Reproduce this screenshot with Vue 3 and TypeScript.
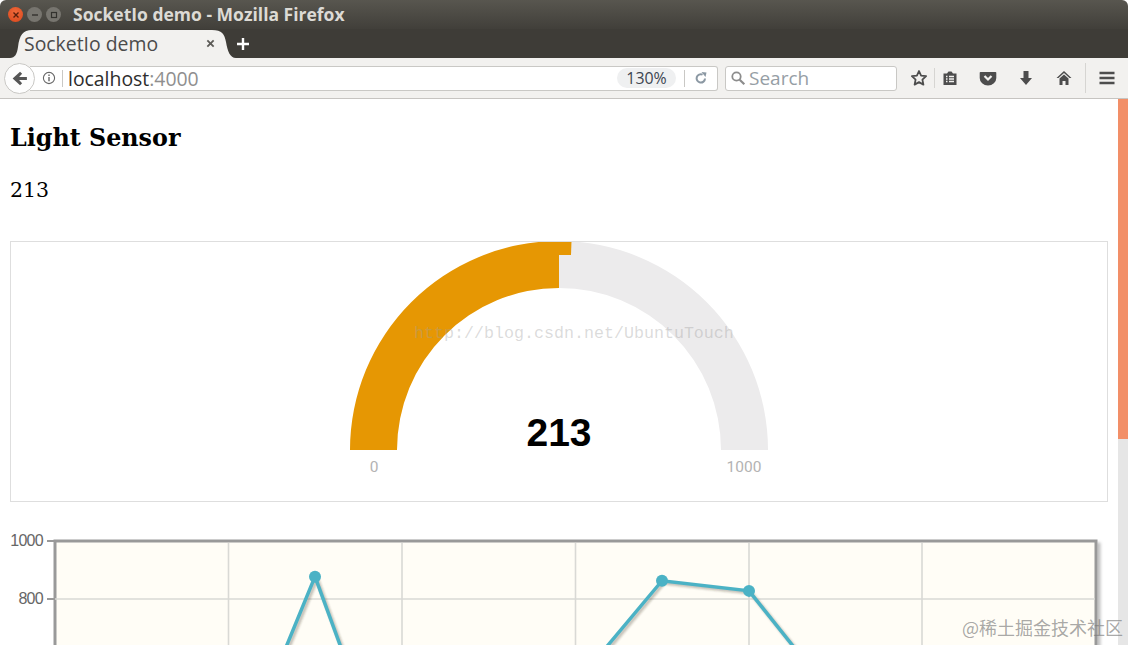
<template>
  <div class="window">
    <header class="titlebar">
      <div class="traffic">
        <span class="dot close"><svg viewBox="0 0 10 10"><path d="M2.5 2.5l5 5M7.5 2.5l-5 5" stroke="#5b1f0c" stroke-width="1.4"/></svg></span>
        <span class="dot"><svg viewBox="0 0 10 10"><path d="M2 5h6" stroke="#33322e" stroke-width="1.4"/></svg></span>
        <span class="dot"><svg viewBox="0 0 10 10"><rect x="2.5" y="2.5" width="5" height="5" fill="none" stroke="#33322e" stroke-width="1.2"/></svg></span>
      </div>
      <span class="window-title">SocketIo demo - Mozilla Firefox</span>
    </header>

    <div class="tabbar">
      <div class="tab">
        <svg class="tab-bg" viewBox="0 0 226 29" preserveAspectRatio="none">
          <path d="M0 29C5 29 7 25 8 18C9.500 6 13 1 22 1H202C212 1 214.500 5 216 13C217.500 22 220 29 226 29Z" fill="#f2f1ef"/>
        </svg>
        <span class="tab-label">SocketIo demo</span>
        <svg class="tab-close" viewBox="0 0 10 10"><path d="M1.5 1.5l7 7M8.500 1.500l-7 7" stroke="#5c5b57" stroke-width="2"/></svg>
      </div>
      <svg class="tab-new" viewBox="0 0 14 14"><path d="M7 1v12M1 7h12" stroke="#fff" stroke-width="2.4"/></svg>
    </div>

    <nav class="toolbar">
      <div class="back">
        <svg viewBox="0 0 18 18"><path d="M9.5 2.500L2.500 9l7 6.500 2-2L8.600 10.500H16v-3H8.600l2.900-3z" fill="#555"/></svg>
      </div>
      <div class="urlbar">
        <svg class="info" viewBox="0 0 14 14"><circle cx="7" cy="7" r="5.600" fill="none" stroke="#666" stroke-width="1.100"/><path d="M7 6v4.200M7 3.600v1.400" stroke="#666" stroke-width="1.400"/></svg>
        <span class="url-sep"></span>
        <span class="url"><span class="host">localhost</span>:4000</span>
        <span class="zoom">130%</span>
        <span class="url-sep reload-sep"></span>
        <svg class="reload" viewBox="0 0 14 14"><path d="M11 7.500A4.200 4.200 0 1 1 8.600 3.600" fill="none" stroke="#8b98a3" stroke-width="2"/><path d="M7.500 1l5 .5-1 4.500z" fill="#8b98a3"/></svg>
      </div>
      <div class="searchbar">
        <svg viewBox="0 0 16 16"><circle cx="6.500" cy="6.500" r="4.200" fill="none" stroke="#8c8c8c" stroke-width="1.800"/><path d="M9.700 9.700l4.600 4.600" stroke="#8c8c8c" stroke-width="2.200"/></svg>
        <span>Search</span>
      </div>
      <div class="tools">
        <svg class="tool star" viewBox="0 0 18 18"><path d="M9 2l2.100 4.600 5 .6-3.700 3.400 1 5L9 13.100l-4.400 2.500 1-5L1.900 7.200l5-.6z" fill="none" stroke="#4d4d4d" stroke-width="1.800" stroke-linejoin="round"/></svg>
        <span class="tool-sep"></span>
        <svg class="tool" viewBox="0 0 18 18"><path d="M2.500 4.500h3.500l1.500-2h3l1.500 2h3.500v11.500h-13z" fill="#4d4d4d"/><path d="M5 7.500h1.500M8 7.500h5M5 10h1.500M8 10h5M5 12.500h1.500M8 12.500h5" stroke="#f2f1ef" stroke-width="1.300"/></svg>
        <svg class="tool" viewBox="0 0 18 18"><path d="M1.500 3h15a.8.8 0 0 1 .8.8V9a8.300 7.500 0 0 1-16.600 0V3.800a.8.8 0 0 1 .8-.8z" fill="#4d4d4d"/><path d="M5.500 7l3.500 3.500L12.500 7" fill="none" stroke="#f2f1ef" stroke-width="2.200"/></svg>
        <svg class="tool" viewBox="0 0 18 18"><path d="M6.500 2h5v7h3.500L9 16 3 9h3.500z" fill="#4d4d4d"/></svg>
        <svg class="tool home" viewBox="0 0 18 18"><path d="M9 2L1.500 9h2L9 4l5.500 5h2z" fill="#4d4d4d"/><path d="M4.500 9.500L9 5.500l4.500 4V16h-3v-4h-3v4h-3z" fill="#4d4d4d"/></svg>
        <span class="tool-sep wide"></span>
        <svg class="tool menu" viewBox="0 0 18 18"><path d="M1.500 4h15M1.500 9h15M1.500 14h15" stroke="#4d4d4d" stroke-width="2.400"/></svg>
      </div>
    </nav>

    <div class="viewport">
      <main class="page">
        <h3>Light Sensor</h3>
        <p>{{ reading }}</p>

        <section class="gauge-box">
          <svg class="gauge" viewBox="339 242 440 260">
            <path :d="halfRing(1)" fill="#ecebec" />
            <path :d="halfRing(-1)" fill="#e69703" />
            <path d="M559 241 A209 209 0 0 1 571.500 241.400 L571 255 L559 255Z" fill="#e69703" />
            <text x="559" y="446" class="gauge-value">{{ reading }}</text>
            <text x="374" y="471.500" class="gauge-limit">0</text>
            <text x="744" y="471.500" class="gauge-limit">1000</text>
          </svg>
        </section>

        <svg class="chart" viewBox="10 525 1098 400">
          <filter id="plot-shadow" x="-2%" y="-2%" width="104%" height="104%">
            <feDropShadow dx="3" dy="3" stdDeviation="1.500" flood-color="#000" flood-opacity=".25" />
          </filter>
          <filter id="line-shadow" x="-5%" y="-5%" width="110%" height="110%">
            <feGaussianBlur stdDeviation="1" />
          </filter>
          <rect x="55" y="541" width="1041" height="380" fill="#fffdf6" stroke="#999" stroke-width="3" filter="url(#plot-shadow)" />
          <path v-for="x in gridX" :key="x" :d="`M${x} 543V920`" stroke="#d9d9d5" stroke-width="1.600" />
          <path d="M55 599H1095" stroke="#d9d9d5" stroke-width="1.600" />
          <path d="M47 541h7M47 599h7" stroke="#999" stroke-width="2" />
          <text x="43" y="546" class="axis">1000</text>
          <text x="43" y="604" class="axis">800</text>
          <polyline :points="linePoints" transform="translate(2 2)" fill="none" stroke="rgba(60,50,30,.3)" stroke-width="3.500" filter="url(#line-shadow)" />
          <polyline :points="linePoints" fill="none" stroke="#4bb2c5" stroke-width="3.500" />
          <circle v-for="p in points" :key="p.x" :cx="p.x" :cy="p.y" r="6" fill="#4bb2c5" />
        </svg>
      </main>

      <aside class="scrollbar"><div class="thumb"></div></aside>

      <span class="mark-csdn">http://blog.csdn.net/UbuntuTouch</span>
      <span class="mark-juejin">@稀土掘金技术社区</span>
    </div>
  </div>
</template>

<script setup lang="ts">
import { computed } from 'vue';

const reading = 213;

// gauge geometry
const cx = 559;
const cy = 450;
const outer = 209;
const inner = 162;

const halfRing = (side: number) => {
  const sweepOuter = side > 0 ? 1 : 0;
  const sweepInner = side > 0 ? 0 : 1;
  return `M${cx} ${cy - outer}A${outer} ${outer} 0 0 ${sweepOuter} ${cx + side * outer} ${cy}`
    + `H${cx + side * inner}A${inner} ${inner} 0 0 ${sweepInner} ${cx} ${cy - inner}Z`;
};

const gridX = [228.5, 402, 575.5, 749, 922];

const samples = [152, 877, 59, 507, 863, 828, 452];
const sampleX = [228.5, 315, 402, 575.5, 662, 749, 836];

const points = computed(() =>
  samples.map((v, i) => ({ x: sampleX[i], y: 541 + (1000 - v) * 0.29 })),
);

const linePoints = computed(() => points.value.map((p) => `${p.x},${p.y}`).join(' '));
</script>

<style>
html,
body {
  margin: 0;
  overflow: hidden;
  background: #fff;
}
</style>

<style scoped>
.window {
  width: 1128px;
  height: 645px;
  display: flex;
  flex-direction: column;
  overflow: hidden;
  font-family: "Open Sans", "Noto Sans", sans-serif;
}

.titlebar {
  height: 29px;
  display: flex;
  align-items: center;
  padding-left: 8px;
  background: linear-gradient(#58564f, #413f3a);
  border-radius: 6px 6px 0 0;
}

.traffic {
  display: flex;
  gap: 4px;
  width: 65px;
}

.dot {
  width: 15px;
  height: 15px;
  border-radius: 50%;
  background: #77756f;
  display: flex;
  align-items: center;
  justify-content: center;
}

.dot svg {
  width: 10px;
  height: 10px;
}

.dot.close {
  background: radial-gradient(circle at 50% 35%, #f0693a, #d9471c);
}

.window-title {
  font-size: 17.5px;
  font-weight: 700;
  color: #dcdad5;
  white-space: nowrap;
  margin-top: -2px;
}

.tabbar {
  height: 29px;
  display: flex;
  align-items: flex-end;
  background: #3e3c37;
  padding-left: 10px;
}

.tab {
  position: relative;
  width: 226px;
  height: 29px;
  display: flex;
  align-items: center;
  padding: 0 21px 0 14px;
  box-sizing: border-box;
}

.tab-bg {
  position: absolute;
  inset: 0;
  width: 100%;
  height: 100%;
}

.tab-label {
  position: relative;
  font-size: 19.4px;
  color: #4b4b4b;
  white-space: nowrap;
}

.tab-close {
  position: relative;
  width: 9px;
  height: 9px;
  margin-left: auto;
}

.tab-new {
  width: 14px;
  height: 14px;
  margin: 0 0 7px 0;
}

.toolbar {
  height: 41px;
  box-sizing: border-box;
  display: flex;
  align-items: center;
  padding: 0 0 0 4px;
  background: #f2f1ef;
  border-bottom: 1px solid #c6c4c1;
}

.back {
  width: 31px;
  height: 31px;
  box-sizing: border-box;
  border: 1px solid #c9c8c5;
  border-radius: 50%;
  background: #fdfdfd;
  display: flex;
  align-items: center;
  justify-content: center;
  position: relative;
  z-index: 1;
}

.back svg {
  width: 19px;
  height: 19px;
}

.urlbar {
  width: 688px;
  height: 25px;
  margin-left: -5px;
  box-sizing: border-box;
  display: flex;
  align-items: center;
  padding-left: 12px;
  background: #fff;
  border: 1px solid #c9c8c5;
  border-left: 0;
  border-radius: 0 3px 3px 0;
}

.info {
  width: 14px;
  height: 14px;
}

.url-sep {
  width: 1px;
  height: 17px;
  margin-left: 6px;
  background: #c9c8c5;
}

.url {
  margin-left: 5px;
  font-size: 19.4px;
  color: #8f8f8f;
  white-space: nowrap;
}

.host {
  color: #2d2d2d;
}

.zoom {
  margin-left: auto;
  width: 59px;
  height: 20px;
  line-height: 20px;
  text-align: center;
  border-radius: 10px;
  background: #eff0f1;
  font-size: 15.9px;
  color: #3c4550;
}

.reload-sep {
  margin-left: 8px;
}

.reload {
  width: 14px;
  height: 14px;
  margin: 0 9px 0 9px;
}

.searchbar {
  width: 172px;
  height: 25px;
  margin-left: 7px;
  box-sizing: border-box;
  display: flex;
  align-items: center;
  gap: 3px;
  padding-left: 4px;
  background: #fff;
  border: 1px solid #c9c8c5;
  border-radius: 3px;
  font-size: 19px;
  color: #969ea5;
}

.searchbar svg {
  width: 16px;
  height: 16px;
}

.tools {
  display: flex;
  align-items: center;
  margin-left: 13px;
}

.tool {
  width: 18px;
  height: 18px;
  margin-right: 20px;
}

.tool.star {
  margin-right: 6px;
}

.tool.home {
  margin-right: 12px;
}

.tool-sep {
  width: 1px;
  height: 20px;
  background: #d6d5d2;
  margin-right: 6px;
}

.tool-sep.wide {
  height: 30px;
  margin: 0 12px 0 0;
}

.tool.menu {
  margin-right: 0;
}

.viewport {
  flex: 1;
  min-height: 0;
  display: flex;
  position: relative;
  overflow: hidden;
}

.page {
  flex: 1;
  min-width: 0;
  padding: 0 10px;
  color: #000;
  font-family: "DejaVu Serif", serif;
  background: #fff;
}

h3 {
  margin: 25px 0 0;
  height: 28px;
  line-height: 28px;
  font-size: 23.8px;
  font-weight: 700;
}

p {
  margin: 24px 0 0;
  height: 28px;
  line-height: 28px;
  font-size: 20.5px;
}

.gauge-box {
  margin-top: 37px;
  height: 261px;
  box-sizing: border-box;
  border: 1px solid #dedede;
  display: flex;
  justify-content: center;
}

.gauge {
  width: 440px;
  height: 260px;
  flex: none;
}

.gauge-value {
  font-family: "Liberation Sans", sans-serif;
  font-size: 39px;
  font-weight: 700;
  text-anchor: middle;
}

.gauge-limit {
  font-family: "Roboto", "Liberation Sans", sans-serif;
  font-size: 15.5px;
  fill: #b3b3b3;
  text-anchor: middle;
}

.chart {
  display: block;
  width: 1098px;
  height: 400px;
  margin-top: 23px;
}

.axis {
  font-family: "Liberation Sans", sans-serif;
  font-size: 16px;
  letter-spacing: -0.7px;
  fill: #666;
  text-anchor: end;
}

.scrollbar {
  width: 10px;
  background: #e6e6e6;
}

.thumb {
  height: 340px;
  background: #f28f68;
}

.mark-csdn {
  position: absolute;
  left: 414px;
  top: 225px;
  font-family: "Liberation Mono", monospace;
  font-size: 16.67px;
  color: rgba(160, 160, 160, 0.38);
  white-space: nowrap;
}

.mark-juejin {
  position: absolute;
  left: 962px;
  top: 515px;
  font-family: "Noto Sans CJK SC", sans-serif;
  font-size: 18px;
  line-height: 26px;
  color: rgba(120, 120, 120, 0.65);
  white-space: nowrap;
}
</style>
